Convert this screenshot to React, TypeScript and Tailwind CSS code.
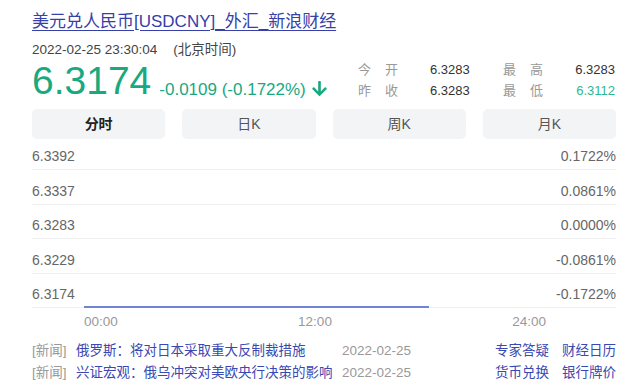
import React from "react";
import { FaArrowDown } from "react-icons/fa";

const green = "text-[#1aa87f]";

const stats = [
  { l1: "今", l2: "开", v: "6.3283", l3: "最", l4: "高", v2: "6.3283", g: false },
  { l1: "昨", l2: "收", v: "6.3283", l3: "最", l4: "低", v2: "6.3112", g: true },
];

const rows = [
  ["6.3392", "0.1722%"],
  ["6.3337", "0.0861%"],
  ["6.3283", "0.0000%"],
  ["6.3229", "-0.0861%"],
  ["6.3174", "-0.1722%"],
];

const tabs = ["分时", "日K", "周K", "月K"];

const news = [
  { t: "俄罗斯：将对日本采取重大反制裁措施", d: "2022-02-25", a: "专家答疑", b: "财经日历" },
  { t: "兴证宏观：俄乌冲突对美欧央行决策的影响", d: "2022-02-25", a: "货币兑换", b: "银行牌价" },
];

export default function App() {
  return (
    <div
      className="w-[640px] h-[388px] bg-white overflow-hidden pl-[32px] pr-[24px] pt-[10px] text-[#333]"
      style={{ fontFamily: '"Liberation Sans", "Noto Sans CJK SC", sans-serif' }}
    >
      <a className="block text-[17px] leading-[24px] text-[#3640a8] underline underline-offset-[3px] decoration-1">
        美元兑人民币[USDCNY]_外汇_新浪财经
      </a>
      <div className="mt-[7px] text-[13.5px] leading-[18px] text-[#444]">
        2022-02-25 23:30:04<span className="ml-[16px]">(北京时间)</span>
      </div>

      <div className="flex items-start justify-between mt-[2px]">
        <div className="flex items-end">
          <span className={`text-[39px] leading-[40px] ${green}`}>6.3174</span>
          <span className={`ml-[8px] mb-[1px] text-[17px] leading-[20px] ${green}`}>
            -0.0109 (-0.1722%)
          </span>
          <FaArrowDown className={`ml-[5px] mb-[4px] ${green}`} size={17} />
        </div>
        <div className="flex flex-col gap-[1px] text-[13px] leading-[20px] mt-[-1px] mr-[1px]">
          {stats.map((s) => (
            <div key={s.l1} className="flex">
              <span className="w-[27px] text-[#999]">{s.l1}</span>
              <span className="w-[45px] text-[#999]">{s.l2}</span>
              <span className="w-[73px] text-[#333]">{s.v}</span>
              <span className="w-[27px] text-[#999]">{s.l3}</span>
              <span className="w-[43px] text-[#999]">{s.l4}</span>
              <span className={`w-[42px] text-right ${s.g ? "text-[#2bb891]" : "text-[#333]"}`}>
                {s.v2}
              </span>
            </div>
          ))}
        </div>
      </div>

      <div className="grid grid-cols-4 gap-[17px] mt-[8px]">
        {tabs.map((t, i) => (
          <div
            key={t}
            className={`h-[30px] rounded-[5px] bg-[#f3f4f6] flex items-center justify-center text-[14px] ${
              i === 0 ? "font-bold text-[#222]" : "text-[#555]"
            }`}
          >
            {t}
          </div>
        ))}
      </div>

      <div className="relative">
        {rows.map(([l, r], i) => (
          <div
            key={l}
            className={`flex items-end justify-between border-b border-[#f0f0f0] text-[14px] leading-[17px] text-[#666] pb-[4px] ${
              i === 0 ? "h-[31px]" : "h-[34.5px]"
            }`}
          >
            <span>{l}</span>
            <span>{r}</span>
          </div>
        ))}
        <div className="absolute left-[52px] bottom-[0px] w-[345px] h-[2px] bg-[#7283d6]" />
      </div>

      <div className="relative h-[26px] text-[13.5px] text-[#999] ml-[52px] w-[462px]">
        <span className="absolute left-0 top-[4px]">00:00</span>
        <span className="absolute left-1/2 -translate-x-1/2 top-[4px]">12:00</span>
        <span className="absolute right-0 top-[4px]">24:00</span>
      </div>

      <div className="flex flex-col mt-[6px] text-[13.5px] leading-[22px] whitespace-nowrap">
        {news.map((n) => (
          <div key={n.t} className="flex">
            <span className="w-[44px] text-[#999]">[新闻]</span>
            <span className="w-[266px] text-[#3a48b2]">{n.t}</span>
            <span className="w-[153px] text-[#999]">{n.d}</span>
            <span className="text-[#3a48b2]">{n.a}</span>
            <span className="ml-[13px] text-[#3a48b2]">{n.b}</span>
          </div>
        ))}
      </div>
    </div>
  );
}
